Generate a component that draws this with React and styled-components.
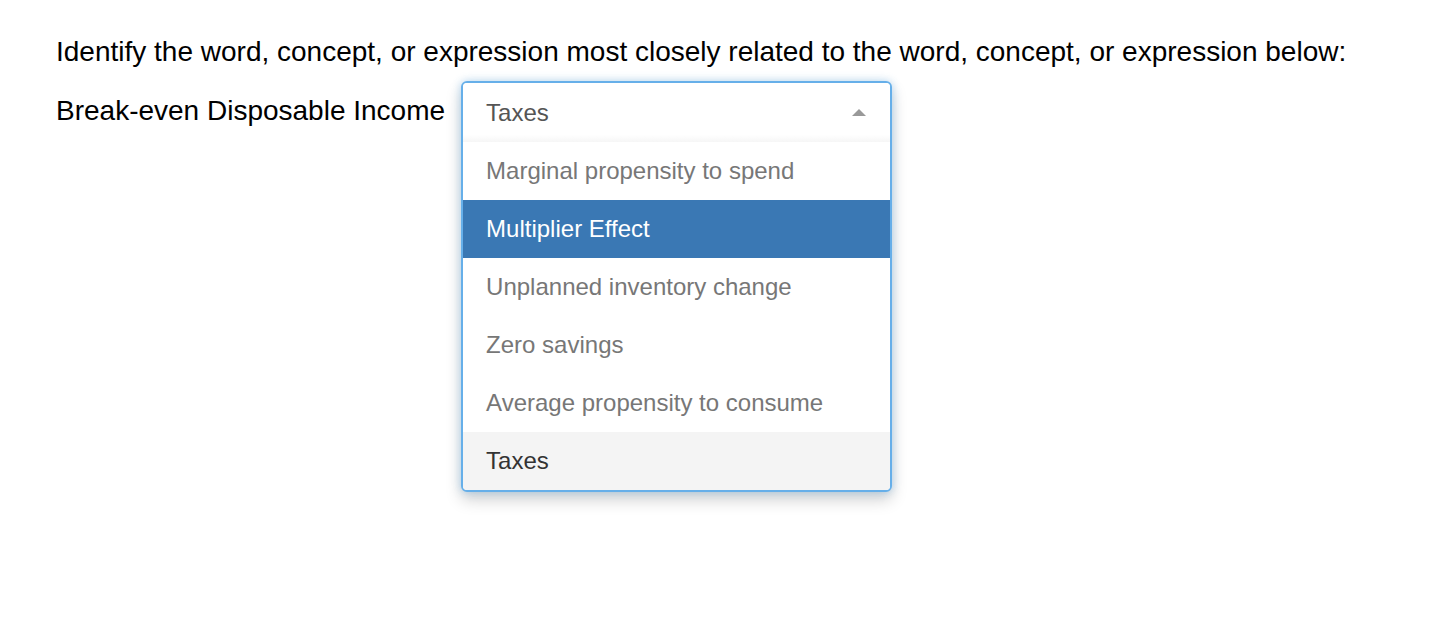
import React, { useState } from "react";
import styled, { createGlobalStyle } from "styled-components";

const GlobalStyle = createGlobalStyle`
  html, body {
    margin: 0;
    padding: 0;
    background: #fff;
    font-family: "Liberation Sans", Arial, sans-serif;
  }
`;

const Page = styled.div`
  padding: 36px 56px 140px;
  color: #000;
  font-size: 28px;
`;

const Prompt = styled.p`
  margin: 0 0 13px;
  line-height: 32px;
`;

const Row = styled.div`
  display: flex;
  align-items: flex-start;
  gap: 16px;
`;

const Term = styled.span`
  line-height: 60px;
`;

const Select = styled.div`
  width: 431px;
  font-size: 24px;
  background: #fff;
  border: 2px solid #66afe9;
  border-radius: 6px;
  overflow: hidden;
  box-sizing: border-box;
  box-shadow: 0 0 8px rgba(102, 175, 233, 0.45), 0 8px 16px rgba(0, 0, 0, 0.18);
`;

const Head = styled.div`
  display: flex;
  align-items: center;
  justify-content: space-between;
  height: 59px;
  padding: 0 24px 0 23px;
  color: #555;
  background: linear-gradient(to bottom, #fff 88%, #f6f6f6 100%);
  cursor: pointer;
`;

const Caret = styled.span`
  width: 0;
  height: 0;
  border-left: 7px solid transparent;
  border-right: 7px solid transparent;
  border-bottom: 7px solid #999;
`;

const List = styled.ul`
  list-style: none;
  margin: 0;
  padding: 0;
`;

const Option = styled.li`
  height: 58px;
  display: flex;
  align-items: center;
  padding: 0 23px;
  color: ${(p) => (p.$active ? "#fff" : p.$selected ? "#333" : "#777")};
  background: ${(p) => (p.$active ? "#3a78b4" : p.$selected ? "#f4f4f4" : "#fff")};
  cursor: pointer;
`;

const options = [
  "Marginal propensity to spend",
  "Multiplier Effect",
  "Unplanned inventory change",
  "Zero savings",
  "Average propensity to consume",
  "Taxes",
];

export default function App() {
  const [value, setValue] = useState("Taxes");
  const [hover, setHover] = useState("Multiplier Effect");

  return (
    <>
      <GlobalStyle />
      <Page>
        <Prompt>
          Identify the word, concept, or expression most closely related to the word, concept, or expression below:
        </Prompt>
        <Row>
          <Term>Break-even Disposable Income</Term>
          <Select>
            <Head>
              <span>{value}</span>
              <Caret />
            </Head>
            <List>
              {options.map((o) => (
                <Option
                  key={o}
                  $active={o === hover}
                  $selected={o === value && o !== hover}
                  onMouseEnter={() => setHover(o)}
                  onClick={() => setValue(o)}
                >
                  {o}
                </Option>
              ))}
            </List>
          </Select>
        </Row>
      </Page>
    </>
  );
}
